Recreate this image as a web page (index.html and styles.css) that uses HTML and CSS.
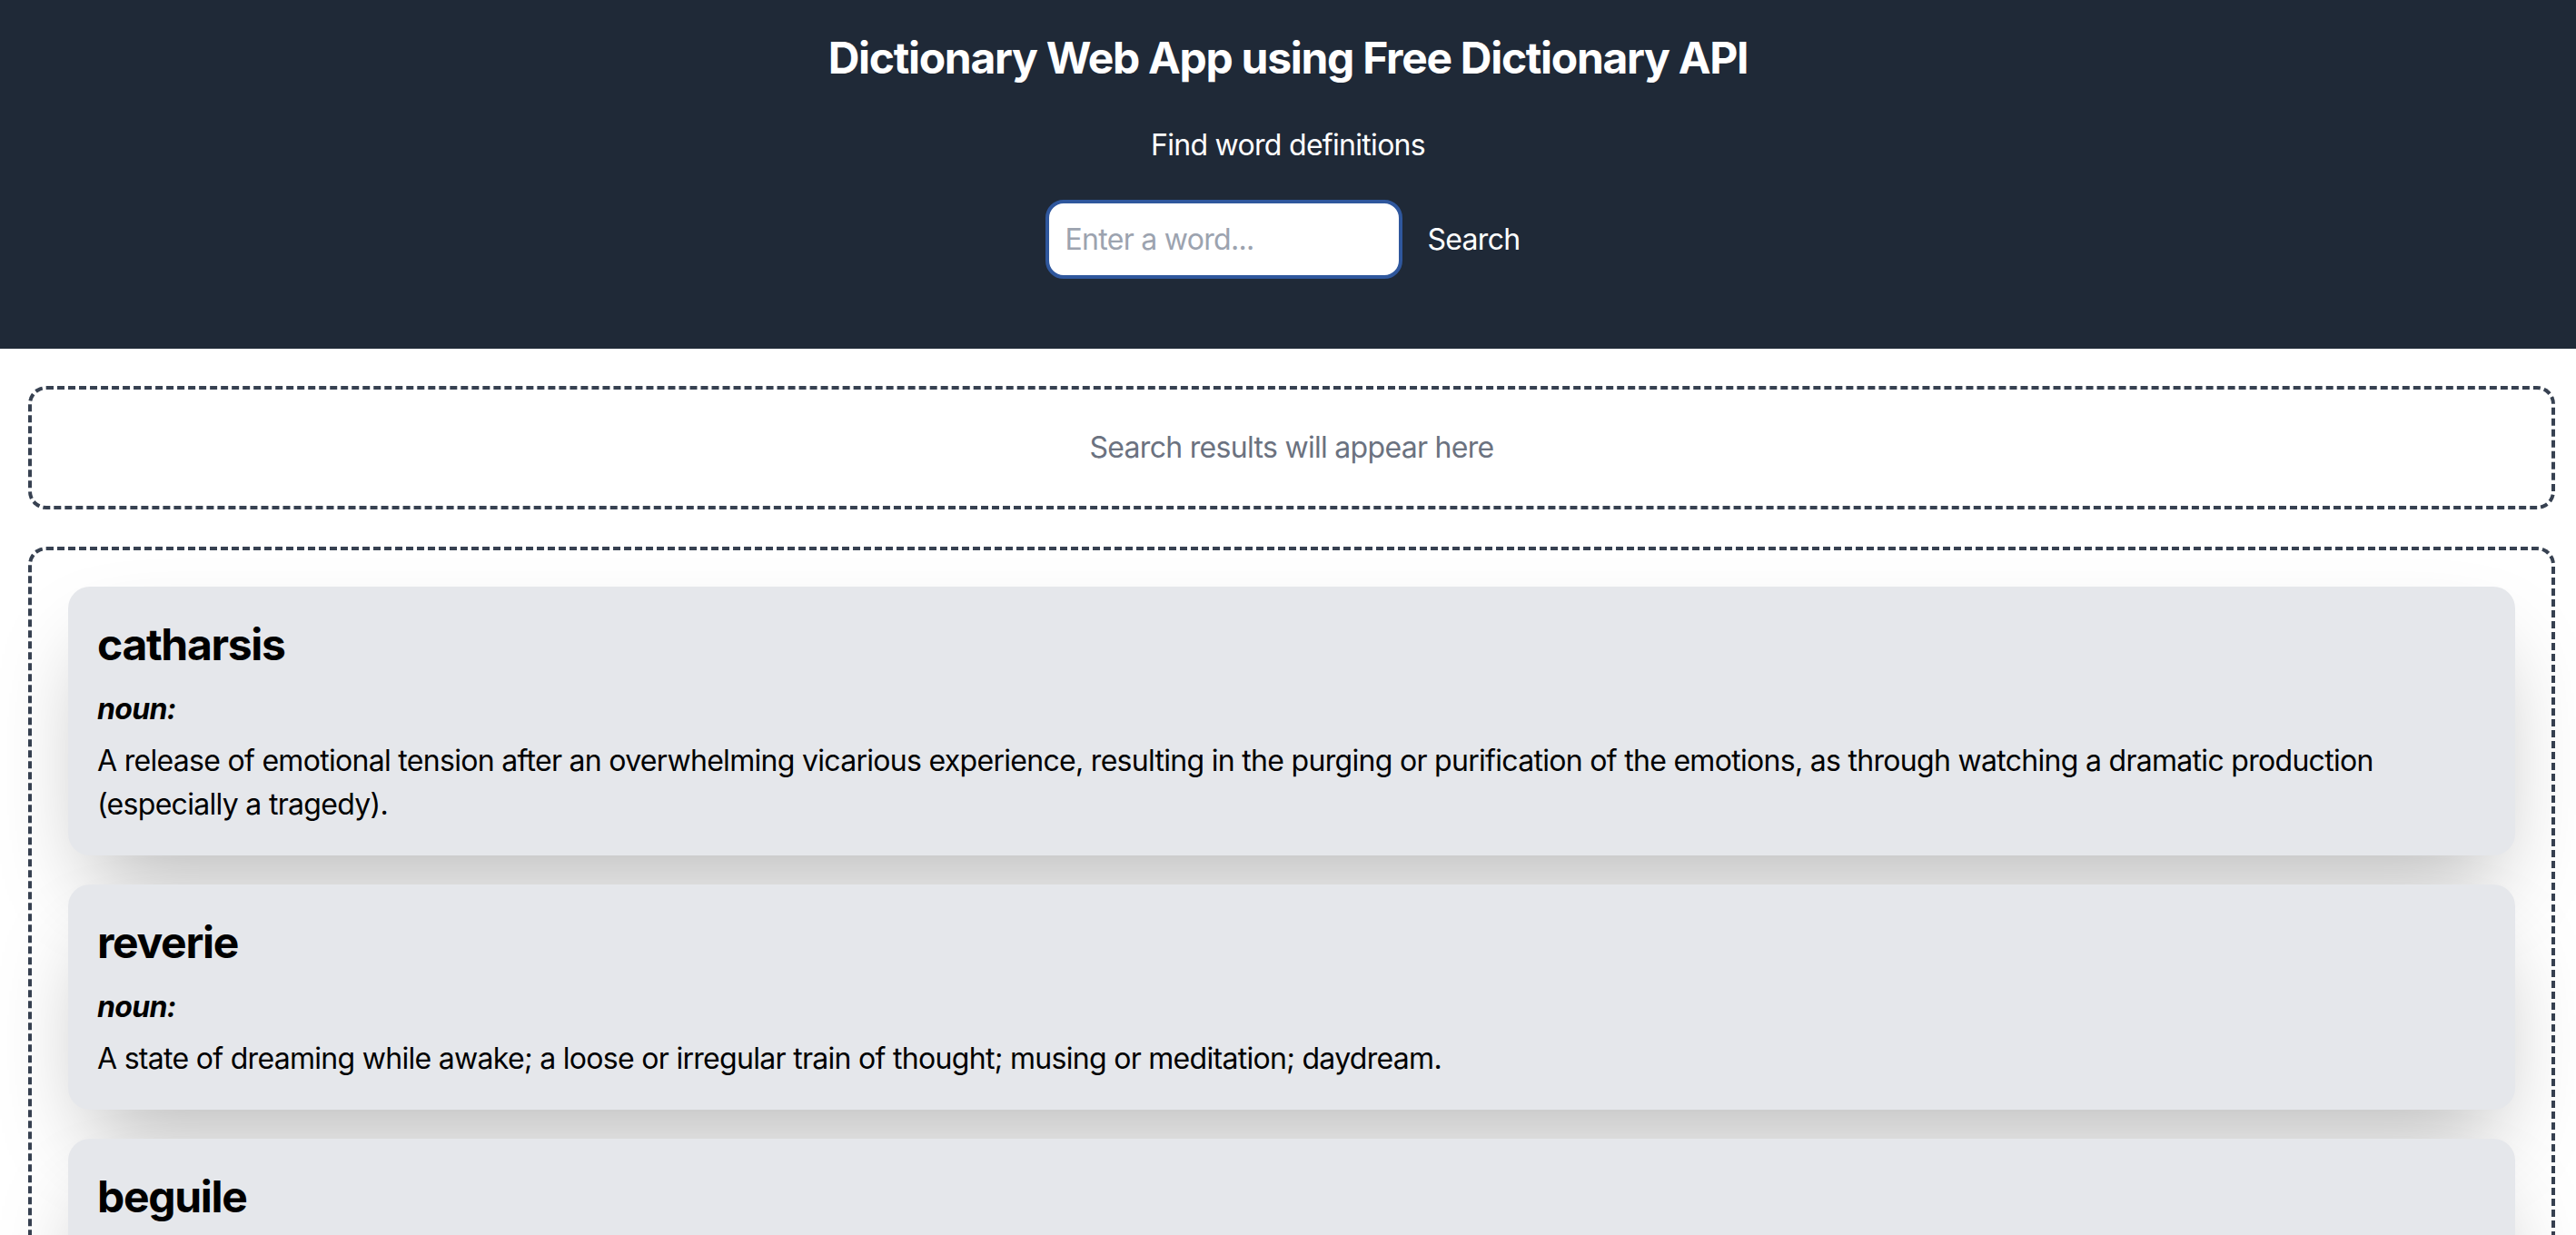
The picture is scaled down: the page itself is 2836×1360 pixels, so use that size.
FILE: index.html
```html
<!DOCTYPE html>
<html lang="en">
<head>
<meta charset="utf-8">
<title>Dictionary Web App</title>
<link rel="stylesheet" href="styles.css">
</head>
<body>
<header class="hero">
  <h1 class="hero-title">Dictionary Web App using Free Dictionary API</h1>
  <p class="hero-sub">Find word definitions</p>
  <form class="search">
    <input class="search-input" type="text" placeholder="Enter a word...">
    <button class="search-btn" type="button">Search</button>
  </form>
</header>
<main>
  <section class="panel panel-empty">
    <p class="empty-text">Search results will appear here</p>
  </section>
  <section class="panel panel-list">
    <article class="card">
      <h2 class="word">catharsis</h2>
      <p class="pos">noun:</p>
      <p class="def">A release of emotional tension after an overwhelming vicarious experience, resulting in the purging or purification of the emotions, as through watching a dramatic production (especially a tragedy).</p>
    </article>
    <article class="card">
      <h2 class="word">reverie</h2>
      <p class="pos">noun:</p>
      <p class="def">A state of dreaming while awake; a loose or irregular train of thought; musing or meditation; daydream.</p>
    </article>
    <article class="card">
      <h2 class="word">beguile</h2>
      <p class="pos">verb:</p>
      <p class="def">To deceive or cheat through cunning or by appealing to one's vanity; to charm or divert.</p>
    </article>
  </section>
</main>
</body>
</html>
```
FILE: styles.css
```css
* { box-sizing: border-box; }
html, body { margin: 0; padding: 0; background: #ffffff; }
body {
  font-family: Inter, "Noto Sans", "Liberation Sans", sans-serif;
  color: #000000;
  letter-spacing: -0.7px;
}
.hero {
  background: #1f2937;
  color: #ffffff;
  text-align: center;
  padding: 32px 0 77px;
}
.hero-title {
  margin: 0;
  font-size: 48px;
  line-height: 64px;
  font-weight: 700;
  letter-spacing: -1.3px;
}
.hero-sub {
  margin: 40px 0 0;
  font-size: 32px;
  line-height: 48px;
}
.search {
  margin-top: 36px;
  display: flex;
  justify-content: center;
  align-items: center;
  padding-left: 4px;
}
.search-input {
  width: 393px;
  height: 87px;
  border: 4px solid #2f579d;
  border-radius: 20px;
  background: #ffffff;
  padding: 0 18px;
  font-family: inherit;
  font-size: 32px;
  letter-spacing: -0.7px;
  color: #111827;
  outline: none;
}
.search-input::placeholder { color: #9ca3af; }
.search-btn {
  margin-left: 12px;
  padding: 0 16px;
  background: transparent;
  border: 0;
  color: #ffffff;
  font-family: inherit;
  font-size: 32px;
  letter-spacing: -0.7px;
  line-height: 48px;
}
.panel {
  margin: 41px 23px 0 31px;
  border: 4px dashed #374151;
  border-radius: 20px;
  padding: 40px;
}
.empty-text {
  margin: 0;
  text-align: center;
  color: #6b7280;
  font-size: 32px;
  line-height: 48px;
}
.panel-list {
  display: flex;
  flex-direction: column;
  gap: 32px;
}
.card {
  background: #e5e7eb;
  border-radius: 24px;
  padding: 32px;
  box-shadow: 0 50px 100px -24px rgba(0, 0, 0, 0.28);
}
.word {
  margin: 0 0 15px;
  font-size: 48px;
  line-height: 64px;
  font-weight: 700;
  letter-spacing: -1.3px;
}
.pos {
  margin: 0 0 9px;
  font-size: 32px;
  line-height: 48px;
  font-weight: 700;
  font-style: italic;
}
.def {
  margin: 0;
  font-size: 32px;
  line-height: 48px;
}
```
